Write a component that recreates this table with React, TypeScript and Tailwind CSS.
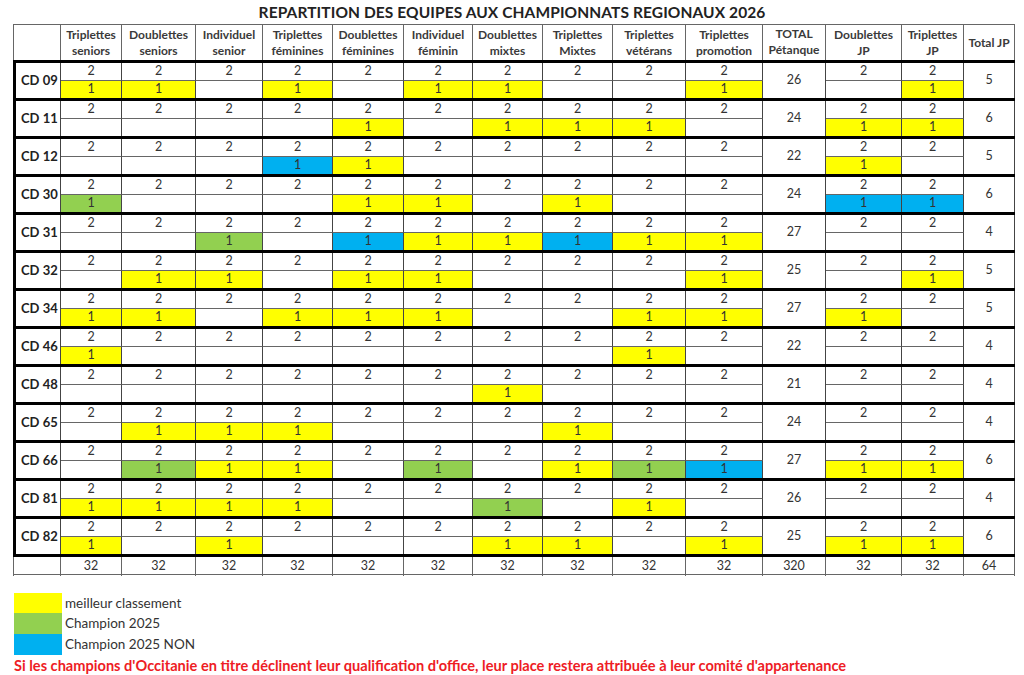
import React from "react";

type C = "" | "y" | "g" | "b";
const Y: C = "y", G: C = "g", B: C = "b", _: C = "";

const COLS =
  "grid grid-cols-[48px_61px_74px_67px_70px_71px_69px_70px_70px_73px_77px_63px_76px_62px_51px]";

const rows: { label: string; ev: C[]; total: number; jp: C[]; tjp: number }[] = [
  { label: "CD 09", ev: [Y, Y, _, Y, _, Y, Y, _, _, Y], total: 26, jp: [_, Y], tjp: 5 },
  { label: "CD 11", ev: [_, _, _, _, Y, _, Y, Y, Y, _], total: 24, jp: [Y, Y], tjp: 6 },
  { label: "CD 12", ev: [_, _, _, B, Y, _, _, _, _, _], total: 22, jp: [Y, _], tjp: 5 },
  { label: "CD 30", ev: [G, _, _, _, Y, Y, _, Y, _, _], total: 24, jp: [B, B], tjp: 6 },
  { label: "CD 31", ev: [_, _, G, _, B, Y, Y, B, Y, Y], total: 27, jp: [_, _], tjp: 4 },
  { label: "CD 32", ev: [_, Y, Y, _, Y, Y, _, _, _, Y], total: 25, jp: [_, Y], tjp: 5 },
  { label: "CD 34", ev: [Y, Y, _, Y, Y, Y, _, _, Y, Y], total: 27, jp: [Y, _], tjp: 5 },
  { label: "CD 46", ev: [Y, _, _, _, _, _, _, _, Y, _], total: 22, jp: [_, _], tjp: 4 },
  { label: "CD 48", ev: [_, _, _, _, _, _, Y, _, _, _], total: 21, jp: [_, _], tjp: 4 },
  { label: "CD 65", ev: [_, Y, Y, Y, _, _, _, Y, _, _], total: 24, jp: [_, _], tjp: 4 },
  { label: "CD 66", ev: [_, G, Y, Y, _, G, _, Y, G, B], total: 27, jp: [Y, Y], tjp: 6 },
  { label: "CD 81", ev: [Y, Y, Y, Y, _, _, G, _, Y, _], total: 26, jp: [_, _], tjp: 4 },
  { label: "CD 82", ev: [Y, _, Y, _, _, _, Y, Y, _, Y], total: 25, jp: [Y, Y], tjp: 6 },
];

const headers: [string, string][] = [
  ["Triplettes", "seniors"],
  ["Doublettes", "seniors"],
  ["Individuel", "senior"],
  ["Triplettes", "féminines"],
  ["Doublettes", "féminines"],
  ["Individuel", "féminin"],
  ["Doublettes", "mixtes"],
  ["Triplettes", "Mixtes"],
  ["Triplettes", "vétérans"],
  ["Triplettes", "promotion"],
];

function bg(c: C) {
  if (c === "y") return "bg-[#ffff00]";
  if (c === "g") return "bg-[#92d050]";
  if (c === "b") return "bg-[#00b0f0]";
  return "bg-white";
}

function TopCell() {
  return (
    <div className="h-[18px] border-r border-b border-r-[#444] border-b-[#666] flex items-center justify-center leading-none">
      2
    </div>
  );
}

function BottomCell({ c }: { c: C }) {
  return (
    <div
      className={`h-[17px] border-r border-[#444] flex items-center justify-center leading-none ${bg(c)}`}
    >
      {c ? "1" : ""}
    </div>
  );
}

export default function App() {
  return (
    <div
      className="w-[1024px] h-[675px] bg-white text-[#333] overflow-hidden"
      style={{ fontFamily: "Lato, 'Open Sans', sans-serif" }}
    >
      <div className="h-[24px] flex items-center justify-center pt-[1px] text-[15.5px] font-bold text-[#222] tracking-[0.1px]">
        REPARTITION DES EQUIPES AUX CHAMPIONNATS REGIONAUX 2026
      </div>
      <div className="ml-[13px] w-[1002px]">
        {/* header */}
        <div className={`${COLS} h-[36px] border-t border-[#666] text-[12px] font-bold text-[#3a3a3a] leading-[16px]`}>
          <div className="border-l border-r border-[#666]" />
          {headers.map(([a, b], i) => (
            <div key={i} className="border-r border-[#666] flex flex-col items-center justify-center pt-[1px]">
              <span>{a}</span>
              <span>{b}</span>
            </div>
          ))}
          <div className="border-r border-[#666] flex flex-col items-center justify-start pt-[1px]">
            <span>TOTAL</span>
            <span>Pétanque</span>
          </div>
          <div className="border-r border-[#666] flex flex-col items-center justify-center pt-[1px]">
            <span>Doublettes</span>
            <span>JP</span>
          </div>
          <div className="border-r border-[#666] flex flex-col items-center justify-center pt-[1px]">
            <span>Triplettes</span>
            <span>JP</span>
          </div>
          <div className="border-r border-[#666] flex items-center justify-center">Total JP</div>
        </div>
        {/* blocks */}
        {rows.map((r) => (
          <div key={r.label} className={`${COLS} border-t-[3px] border-black text-[12.5px]`}>
            <div className="row-span-2 border-l-[3px] border-r border-l-black border-r-[#444] flex items-center pl-[5px] text-[13px] font-bold text-[#222]">
              {r.label}
            </div>
            {r.ev.map((_c, i) => (
              <TopCell key={"t" + i} />
            ))}
            <div className="row-span-2 border-r border-[#444] flex items-center justify-center text-[12.5px]">
              {r.total}
            </div>
            <TopCell />
            <TopCell />
            <div className="row-span-2 border-r border-[#444] flex items-center justify-center text-[12.5px]">
              {r.tjp}
            </div>
            {r.ev.map((c, i) => (
              <BottomCell key={"b" + i} c={c} />
            ))}
            <BottomCell c={r.jp[0]} />
            <BottomCell c={r.jp[1]} />
          </div>
        ))}
        {/* footer */}
        <div className={`${COLS} h-[21px] border-t-[3px] border-b border-t-black border-b-[#666] text-[12.5px]`}>
          <div className="border-l border-r border-[#666]" />
          {Array.from({ length: 10 }).map((_x, i) => (
            <div key={i} className="border-r border-[#666] flex items-center justify-center">32</div>
          ))}
          <div className="border-r border-[#666] flex items-center justify-center">320</div>
          <div className="border-r border-[#666] flex items-center justify-center">32</div>
          <div className="border-r border-[#666] flex items-center justify-center">32</div>
          <div className="border-r border-[#666] flex items-center justify-center">64</div>
        </div>
      </div>
      {/* legend */}
      <div className="ml-[14px] mt-[18px] flex flex-col text-[13.5px] text-[#333]">
        <div className="flex items-center h-[20px]">
          <div className="w-[48px] h-full bg-[#ffff00]" />
          <span className="ml-[3px]">meilleur classement</span>
        </div>
        <div className="flex items-center h-[21px]">
          <div className="w-[48px] h-full bg-[#92d050]" />
          <span className="ml-[3px]">Champion 2025</span>
        </div>
        <div className="flex items-center h-[21px]">
          <div className="w-[48px] h-full bg-[#00b0f0]" />
          <span className="ml-[3px]">Champion 2025 NON</span>
        </div>
        <div className="mt-[2px] text-[14.6px] font-bold text-[#ee1c25] leading-[18px] whitespace-nowrap">
          Si les champions d'Occitanie en titre déclinent leur qualification d'office, leur place restera attribuée à leur comité d'appartenance
        </div>
      </div>
    </div>
  );
}
